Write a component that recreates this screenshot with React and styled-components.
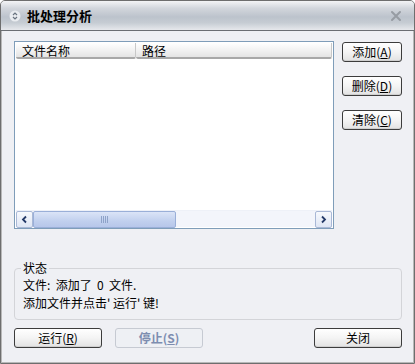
import React from "react";
import styled, { createGlobalStyle } from "styled-components";

const Global = createGlobalStyle`
  html, body { margin: 0; padding: 0; background: #ffffff; }
  body { font-family: "Noto Sans CJK SC", "Liberation Sans", sans-serif; font-size: 12px; }
  * { box-sizing: border-box; }
`;

const Window = styled.div`
  width: 415px;
  height: 364px;
  display: flex;
  flex-direction: column;
  background: #eff0f4;
  border: 1px solid #6e6e6e;
  border-radius: 5px 5px 0 0;
  box-shadow: inset 1px 0 0 #b8b8b8, inset -1px 0 0 #b8b8b8, inset 0 -1px 0 #b8b8b8;
  overflow: hidden;
`;

const TitleBar = styled.div`
  height: 30px;
  flex: none;
  display: flex;
  align-items: center;
  padding: 0 12px 0 8px;
  background: linear-gradient(#f3f4f6 0%, #d2d6dc 25%, #bcc3cc 55%, #c6ccd3 75%, #e6e8ec 100%);
  border-bottom: 1px solid #6b6e73;
  gap: 6px;
`;

const TitleText = styled.div`
  font-weight: 700;
  font-size: 13px;
  color: #000;
  flex: 1;
  line-height: 1;
`;

const Body = styled.div`
  flex: 1;
  display: flex;
  flex-direction: column;
  padding: 10px 12px 0 13px;
`;

const TopRow = styled.div`
  display: flex;
  gap: 8px;
  align-items: flex-start;
`;

const ListBox = styled.div`
  width: 320px;
  height: 188px;
  border: 1px solid #7f9db9;
  background: #fff;
  padding: 1px;
  display: flex;
  flex-direction: column;
`;

const Header = styled.div`
  display: flex;
  height: 16px;
  flex: none;
`;

const HeaderCell = styled.div`
  width: ${(p) => p.$w};
  flex: ${(p) => (p.$grow ? 1 : "none")};
  height: 16px;
  line-height: 15px;
  padding-left: 6px;
  font-size: 12px;
  color: #000;
  background: linear-gradient(#ffffff 0%, #f2f2f2 50%, #e4e4e4 100%);
  border-bottom: 2px solid #a8a8a8;
  border-right: 1px solid #c8c8c8;
  border-radius: 0 0 2px 2px;
`;

const ListArea = styled.div`
  flex: 1;
`;

const HScroll = styled.div`
  height: 17px;
  display: flex;
  background: #f3f5fb;
  border-top: 1px solid #eef1f8;
`;

const ArrowBtn = styled.div`
  width: 17px;
  height: 17px;
  border: 1px solid #a9b8d6;
  border-radius: 2px;
  background: linear-gradient(#f7f9fd, #dfe6f4);
  display: flex;
  align-items: center;
  justify-content: center;
`;

const Thumb = styled.div`
  width: 143px;
  height: 17px;
  border: 1px solid #9aafd8;
  border-radius: 2px;
  background: linear-gradient(#dbe4f7, #c1d0ee 60%, #b7c7ea);
  display: flex;
  align-items: center;
  justify-content: center;
`;

const Track = styled.div`
  flex: 1;
`;

const SideButtons = styled.div`
  display: flex;
  flex-direction: column;
  gap: 14px;
  padding-top: 1px;
`;

const Button = styled.button`
  width: ${(p) => p.$w || "60px"};
  height: 20px;
  padding: 0;
  font-family: "Noto Sans CJK SC", "Liberation Sans", sans-serif;
  font-size: 12px;
  line-height: 1;
  color: ${(p) => (p.disabled ? "#7d8db0" : "#000")};
  font-weight: ${(p) => (p.disabled ? 700 : 400)};
  background: ${(p) =>
    p.disabled ? "#eef0f4" : "linear-gradient(#ffffff 0%, #f4f4f4 50%, #e2e2e2 100%)"};
  border: 1px solid ${(p) => (p.disabled ? "#c6cad2" : "#3c3c3c")};
  border-radius: 3px;
  box-shadow: ${(p) => (p.disabled ? "none" : "inset 0 -1px 0 #cfcfcf")};
  display: flex;
  align-items: center;
  justify-content: center;
`;

const U = styled.span`
  text-decoration: underline;
  text-underline-offset: 1px;
`;

const GroupBox = styled.fieldset`
  margin: 33px 0 0 0;
  width: 388px;
  height: 58px;
  border: 1px solid #d3d4d8;
  border-radius: 4px;
  padding: 3px 0 0 8px;
  display: flex;
  flex-direction: column;
  gap: 2px;
`;

const Legend = styled.legend`
  padding: 0 2px;
  margin-left: -2px;
  font-size: 12px;
  line-height: 12px;
  color: #000;
`;

const StatusLine = styled.div`
  font-size: 12px;
  line-height: 16px;
  color: #000;
  white-space: pre;
`;

const BottomRow = styled.div`
  display: flex;
  margin-top: 8px;
  gap: 13px;
`;

const Spacer = styled.div`
  flex: 1;
`;

const TitleIcon = () => (
  <svg width="12" height="12" viewBox="0 0 12 12">
    <circle cx="6" cy="6" r="5.5" fill="#e9ecf0" />
    <path d="M4 5 L6 3 L8 5" fill="none" stroke="#6a7480" strokeWidth="1.2" />
    <path d="M4 7 L6 9 L8 7" fill="none" stroke="#6a7480" strokeWidth="1.2" />
  </svg>
);

const CloseIcon = () => (
  <svg width="12" height="12" viewBox="0 0 12 12">
    <path d="M2 2 L10 10 M10 2 L2 10" stroke="#979ca3" strokeWidth="2" strokeLinecap="round" />
  </svg>
);

const LeftArrow = () => (
  <svg width="9" height="9" viewBox="0 0 9 9">
    <path d="M6 1.5 L3 4.5 L6 7.5" fill="none" stroke="#253a68" strokeWidth="1.8" />
  </svg>
);

const RightArrow = () => (
  <svg width="9" height="9" viewBox="0 0 9 9">
    <path d="M3 1.5 L6 4.5 L3 7.5" fill="none" stroke="#253a68" strokeWidth="1.8" />
  </svg>
);

const Grip = () => (
  <svg width="8" height="7" viewBox="0 0 8 7">
    {[0, 2, 4, 6].map((x) => (
      <rect key={x} x={x} y="0" width="1" height="7" fill="#8ea2c8" />
    ))}
  </svg>
);

export default function App() {
  return (
    <>
      <Global />
      <Window>
        <TitleBar>
          <TitleIcon />
          <TitleText>批处理分析</TitleText>
          <CloseIcon />
        </TitleBar>
        <Body>
          <TopRow>
            <ListBox>
              <Header>
                <HeaderCell $w="120px">文件名称</HeaderCell>
                <HeaderCell $grow>路径</HeaderCell>
              </Header>
              <ListArea />
              <HScroll>
                <ArrowBtn>
                  <LeftArrow />
                </ArrowBtn>
                <Thumb>
                  <Grip />
                </Thumb>
                <Track />
                <ArrowBtn>
                  <RightArrow />
                </ArrowBtn>
              </HScroll>
            </ListBox>
            <SideButtons>
              <Button>
                添加(<U>A</U>)
              </Button>
              <Button>
                删除(<U>D</U>)
              </Button>
              <Button>
                清除(<U>C</U>)
              </Button>
            </SideButtons>
          </TopRow>
          <GroupBox>
            <Legend>状态</Legend>
            <StatusLine>文件:  添加了  0  文件.</StatusLine>
            <StatusLine>添加文件并点击' 运行' 键!</StatusLine>
          </GroupBox>
          <BottomRow>
            <Button $w="88px">
              运行(<U>R</U>)
            </Button>
            <Button $w="88px" disabled>
              停止(<U>S</U>)
            </Button>
            <Spacer />
            <Button $w="88px">关闭</Button>
          </BottomRow>
        </Body>
      </Window>
    </>
  );
}
